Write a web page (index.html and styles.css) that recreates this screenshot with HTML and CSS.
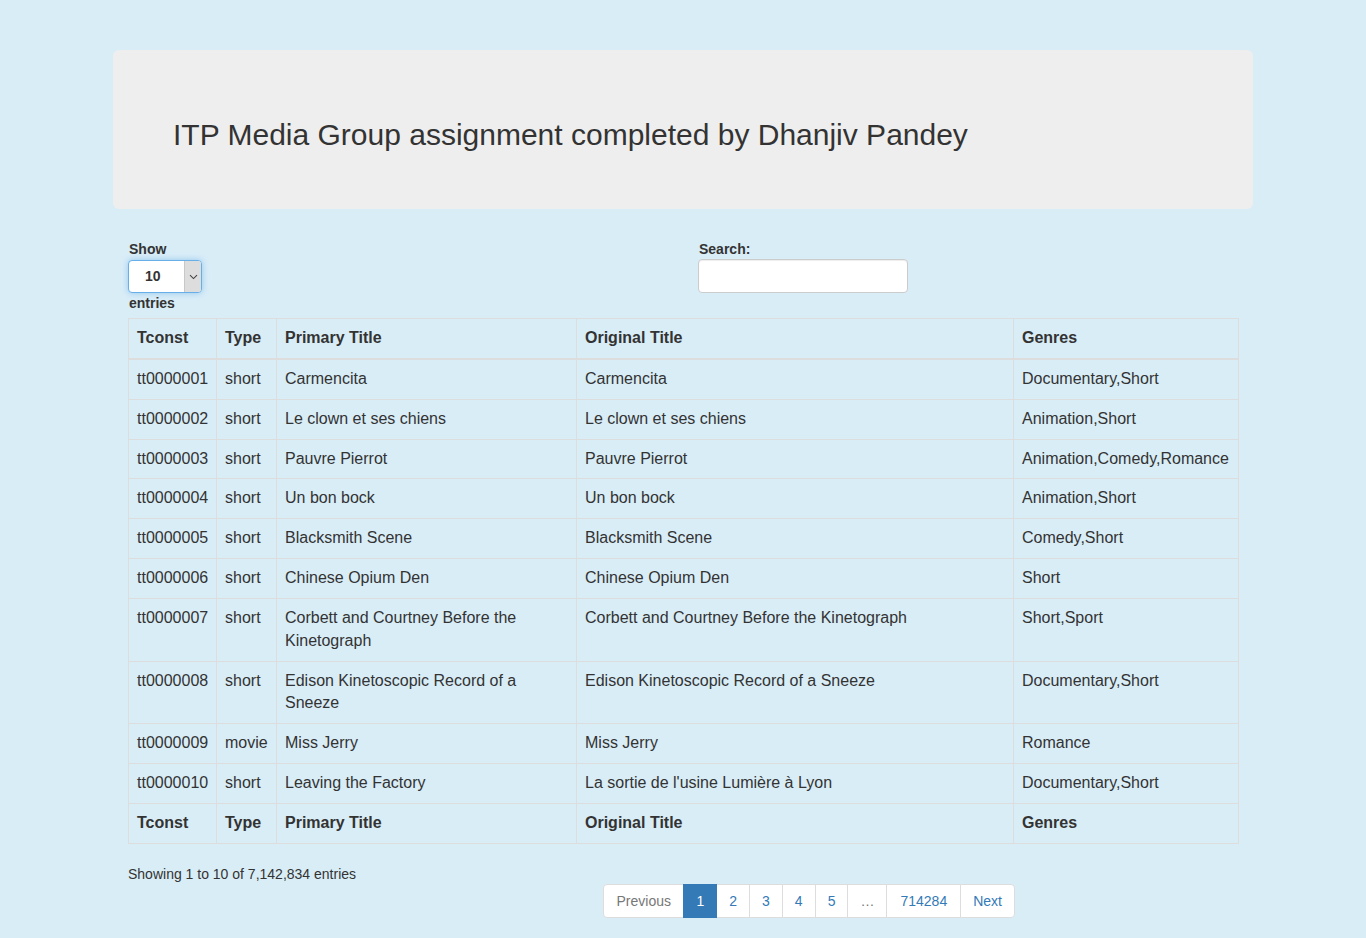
FILE: index.html
```html
<!DOCTYPE html>
<html lang="en">
<head>
<meta charset="utf-8">
<title>ITP Media Group assignment</title>
<link rel="stylesheet" href="styles.css">
</head>
<body>
<div class="container">
  <div class="jumbotron">
    <h2>ITP Media Group assignment completed by Dhanjiv Pandey</h2>
  </div>
  <div class="row">
    <div class="col half">
      <label class="length">Show
        <span class="select"><span class="select-value">10</span><span class="select-arrow"><svg width="9" height="6" viewBox="0 0 9 6"><path d="M1 1.2 L4.5 4.6 L8 1.2" fill="none" stroke="#444" stroke-width="1.1"/></svg></span></span>
        entries</label>
    </div>
    <div class="col half">
      <label class="search">Search:
        <span class="input"></span>
      </label>
    </div>
  </div>
  <div class="row">
    <div class="col full">
      <table class="table">
        <colgroup>
          <col class="w-id"><col class="w-type"><col class="w-primary"><col class="w-original"><col class="w-genres">
        </colgroup>
        <thead>
          <tr><th>Tconst</th><th>Type</th><th>Primary Title</th><th>Original Title</th><th>Genres</th></tr>
        </thead>
        <tbody>
          <tr><td>tt0000001</td><td>short</td><td>Carmencita</td><td>Carmencita</td><td class="nw">Documentary,Short</td></tr>
          <tr><td>tt0000002</td><td>short</td><td>Le clown et ses chiens</td><td>Le clown et ses chiens</td><td class="nw">Animation,Short</td></tr>
          <tr><td>tt0000003</td><td>short</td><td>Pauvre Pierrot</td><td>Pauvre Pierrot</td><td class="nw">Animation,Comedy,Romance</td></tr>
          <tr><td>tt0000004</td><td>short</td><td>Un bon bock</td><td>Un bon bock</td><td class="nw">Animation,Short</td></tr>
          <tr><td>tt0000005</td><td>short</td><td>Blacksmith Scene</td><td>Blacksmith Scene</td><td class="nw">Comedy,Short</td></tr>
          <tr><td>tt0000006</td><td>short</td><td>Chinese Opium Den</td><td>Chinese Opium Den</td><td class="nw">Short</td></tr>
          <tr><td>tt0000007</td><td>short</td><td>Corbett and Courtney Before the Kinetograph</td><td>Corbett and Courtney Before the Kinetograph</td><td class="nw">Short,Sport</td></tr>
          <tr><td>tt0000008</td><td>short</td><td>Edison Kinetoscopic Record of a Sneeze</td><td>Edison Kinetoscopic Record of a Sneeze</td><td class="nw">Documentary,Short</td></tr>
          <tr><td>tt0000009</td><td>movie</td><td>Miss Jerry</td><td>Miss Jerry</td><td class="nw">Romance</td></tr>
          <tr><td>tt0000010</td><td>short</td><td>Leaving the Factory</td><td>La sortie de l'usine Lumière à Lyon</td><td class="nw">Documentary,Short</td></tr>
        </tbody>
        <tfoot>
          <tr><th>Tconst</th><th>Type</th><th>Primary Title</th><th>Original Title</th><th>Genres</th></tr>
        </tfoot>
      </table>
    </div>
  </div>
  <div class="row">
    <div class="col five">
      <div class="info">Showing 1 to 10 of 7,142,834 entries</div>
    </div>
    <div class="col seven">
      <ul class="pagination">
        <li class="disabled"><a>Previous</a></li>
        <li class="active"><a>1</a></li>
        <li><a>2</a></li>
        <li><a>3</a></li>
        <li><a>4</a></li>
        <li><a>5</a></li>
        <li class="disabled"><a>…</a></li>
        <li><a>714284</a></li>
        <li><a>Next</a></li>
      </ul>
    </div>
  </div>
</div>
</body>
</html>
```
FILE: styles.css
```css
* { box-sizing: border-box; }
html, body { margin: 0; }
body {
  background: #d9edf7;
  font-family: "Liberation Sans", Arial, Helvetica, sans-serif;
  font-size: 14px;
  line-height: 1.428571429;
  color: #333;
  padding-top: 50px;
}
.container {
  width: 1170px;
  margin: 0 auto;
  padding: 0 15px;
}
.jumbotron {
  background: #eee;
  border-radius: 6px;
  padding: 48px 60px;
  margin-bottom: 30px;
}
.jumbotron h2 {
  margin: 20px 0 10px;
  font-size: 30px;
  font-weight: 500;
  line-height: 1.1;
  color: #333;
}
.row {
  display: flex;
}
.col { padding: 0 15px; }
.half { width: 50%; }
.full { width: 100%; }
.five { width: 41.6667%; }
.seven { width: 58.3333%; }

label {
  display: inline-block;
  font-weight: bold;
  margin-bottom: 5px;
}
.length { display: block; width: 60px; margin-bottom: 5px; padding-left: 1px; }
.select {
  display: flex;
  width: 74px;
  height: 33px;
  margin: 1px 0 0 -1px;
  background: #fff;
  border: 1px solid #66afe9;
  border-radius: 4px;
  box-shadow: 0 0 6px rgba(102, 175, 233, .6);
  overflow: hidden;
}
.select-value {
  flex: 1;
  padding-left: 16px;
  line-height: 31px;
  font-weight: bold;
  font-size: 14px;
}
.select-arrow {
  width: 17px;
  background: #dddddd;
  border-left: 1px solid #c8c8c8;
  display: flex;
  align-items: center;
  justify-content: center;
}
.search { display: block; padding-left: 1px; }
.input {
  display: block;
  width: 210px;
  height: 34px;
  margin-left: -1px;
  background: #fff;
  border: 1px solid #ccc;
  border-radius: 4px;
  box-shadow: inset 0 1px 1px rgba(0,0,0,.075);
}

.table {
  width: 100%;
  table-layout: fixed;
  border-collapse: collapse;
  border: 1px solid #ddd;
  font-size: 16px;
  margin-bottom: 20px;
}
.w-id { width: 88px; }
.w-type { width: 60px; }
.w-primary { width: 300px; }
.w-original { width: 437px; }
.w-genres { width: 225px; }
.table th, .table td {
  padding: 8px;
  border: 1px solid #ddd;
  text-align: left;
  vertical-align: top;
  line-height: 1.428571429;
}
.table th { font-weight: bold; }
.table thead th { border-bottom: 2px solid #ddd; vertical-align: bottom; }
.nw { white-space: nowrap; }

.info {
  padding-top: 0;
  line-height: 20px;
}
.pagination {
  display: flex;
  list-style: none;
  padding: 0;
  margin: 20px 0;
}
.pagination li a {
  display: block;
  padding: 6px 12px;
  line-height: 1.428571429;
  color: #337ab7;
  background: #fff;
  border: 1px solid #ddd;
  margin-left: -1px;
}
.pagination li:first-child a {
  margin-left: 0;
  border-radius: 4px 0 0 4px;
  padding: 6px 12.5px;
}
.pagination li:nth-child(8) a { padding: 6px 13px; }
.pagination li:last-child a { border-radius: 0 4px 4px 0; }
.pagination li.disabled a { color: #777; }
.pagination li.active a {
  background: #337ab7;
  border-color: #337ab7;
  color: #fff;
  position: relative;
  z-index: 2;
}
```
